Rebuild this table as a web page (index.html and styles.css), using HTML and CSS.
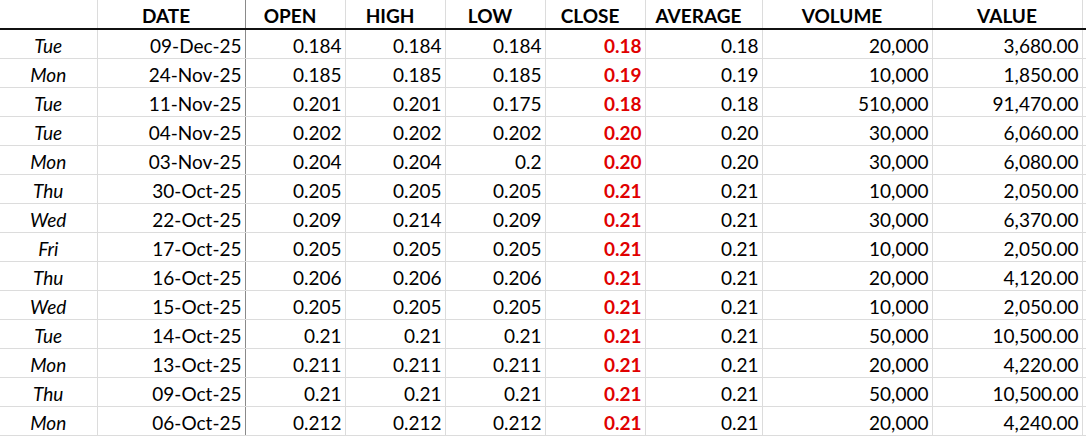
FILE: index.html
```html
<!DOCTYPE html>
<html>
<head>
<meta charset="utf-8">
<link rel="stylesheet" href="styles.css">
</head>
<body>
<table class="sheet">
  <colgroup>
    <col class="c-day"><col class="c-date"><col class="c-num"><col class="c-num"><col class="c-num"><col class="c-num"><col class="c-avg"><col class="c-vol"><col class="c-val"><col class="c-pad">
  </colgroup>
  <thead>
    <tr>
      <th></th><th>DATE</th><th>OPEN</th><th>HIGH</th><th>LOW</th><th>CLOSE</th><th>AVERAGE</th><th>VOLUME</th><th class="h-value">VALUE</th><th></th>
    </tr>
  </thead>
  <tbody>
    <tr><td class="day">Tue</td><td class="date">09-Dec-25</td><td>0.184</td><td>0.184</td><td>0.184</td><td class="close">0.18</td><td>0.18</td><td>20,000</td><td>3,680.00</td><td></td></tr>
    <tr><td class="day">Mon</td><td class="date">24-Nov-25</td><td>0.185</td><td>0.185</td><td>0.185</td><td class="close">0.19</td><td>0.19</td><td>10,000</td><td>1,850.00</td><td></td></tr>
    <tr><td class="day">Tue</td><td class="date">11-Nov-25</td><td>0.201</td><td>0.201</td><td>0.175</td><td class="close">0.18</td><td>0.18</td><td>510,000</td><td>91,470.00</td><td></td></tr>
    <tr><td class="day">Tue</td><td class="date">04-Nov-25</td><td>0.202</td><td>0.202</td><td>0.202</td><td class="close">0.20</td><td>0.20</td><td>30,000</td><td>6,060.00</td><td></td></tr>
    <tr><td class="day">Mon</td><td class="date">03-Nov-25</td><td>0.204</td><td>0.204</td><td>0.2</td><td class="close">0.20</td><td>0.20</td><td>30,000</td><td>6,080.00</td><td></td></tr>
    <tr><td class="day">Thu</td><td class="date">30-Oct-25</td><td>0.205</td><td>0.205</td><td>0.205</td><td class="close">0.21</td><td>0.21</td><td>10,000</td><td>2,050.00</td><td></td></tr>
    <tr><td class="day">Wed</td><td class="date">22-Oct-25</td><td>0.209</td><td>0.214</td><td>0.209</td><td class="close">0.21</td><td>0.21</td><td>30,000</td><td>6,370.00</td><td></td></tr>
    <tr><td class="day">Fri</td><td class="date">17-Oct-25</td><td>0.205</td><td>0.205</td><td>0.205</td><td class="close">0.21</td><td>0.21</td><td>10,000</td><td>2,050.00</td><td></td></tr>
    <tr><td class="day">Thu</td><td class="date">16-Oct-25</td><td>0.206</td><td>0.206</td><td>0.206</td><td class="close">0.21</td><td>0.21</td><td>20,000</td><td>4,120.00</td><td></td></tr>
    <tr><td class="day">Wed</td><td class="date">15-Oct-25</td><td>0.205</td><td>0.205</td><td>0.205</td><td class="close">0.21</td><td>0.21</td><td>10,000</td><td>2,050.00</td><td></td></tr>
    <tr><td class="day">Tue</td><td class="date">14-Oct-25</td><td>0.21</td><td>0.21</td><td>0.21</td><td class="close">0.21</td><td>0.21</td><td>50,000</td><td>10,500.00</td><td></td></tr>
    <tr><td class="day">Mon</td><td class="date">13-Oct-25</td><td>0.211</td><td>0.211</td><td>0.211</td><td class="close">0.21</td><td>0.21</td><td>20,000</td><td>4,220.00</td><td></td></tr>
    <tr><td class="day">Thu</td><td class="date">09-Oct-25</td><td>0.21</td><td>0.21</td><td>0.21</td><td class="close">0.21</td><td>0.21</td><td>50,000</td><td>10,500.00</td><td></td></tr>
    <tr><td class="day">Mon</td><td class="date">06-Oct-25</td><td>0.212</td><td>0.212</td><td>0.212</td><td class="close">0.21</td><td>0.21</td><td>20,000</td><td>4,240.00</td><td></td></tr>
  </tbody>
</table>
</body>
</html>
```

FILE: styles.css
```css
html, body {
  margin: 0;
  padding: 0;
  background: #ffffff;
}

.sheet {
  border-collapse: collapse;
  table-layout: fixed;
  width: 1086px;
  font-family: Lato, "Open Sans", sans-serif;
  font-size: 19px;
  color: #000000;
}

.c-day { width: 97px; }
.c-date { width: 148px; }
.c-num { width: 100px; }
.c-avg { width: 117px; }
.c-vol { width: 170px; }
.c-val { width: 150px; }
.c-pad { width: 4px; }

.sheet th,
.sheet td {
  border: 1px solid #dcdcdc;
  padding: 3px 3px 0 3px;
  height: 25px;
  line-height: 25px;
  white-space: nowrap;
  overflow: hidden;
}

.sheet th {
  font-weight: 700;
  text-align: center;
  border-top: none;
  border-bottom: 2px solid #111111;
  height: 25px;
  padding: 3px 10px 0 0;
}

.sheet th.h-value {
  padding: 3px 2px 0 2px;
}

.sheet td {
  text-align: right;
}

.sheet th:first-child,
.sheet td:first-child {
  border-left: none;
}

.sheet td.day {
  text-align: center;
  font-style: italic;
}

.sheet td.date {
  border-right: 1px solid #8a8a8a;
}

.sheet th:nth-child(2) {
  border-right: 1px solid #8a8a8a;
}

.sheet td.close {
  color: #e00000;
  font-weight: 700;
}

.sheet td:last-child,
.sheet th:last-child {
  border-right: none;
  padding: 0;
}
```
